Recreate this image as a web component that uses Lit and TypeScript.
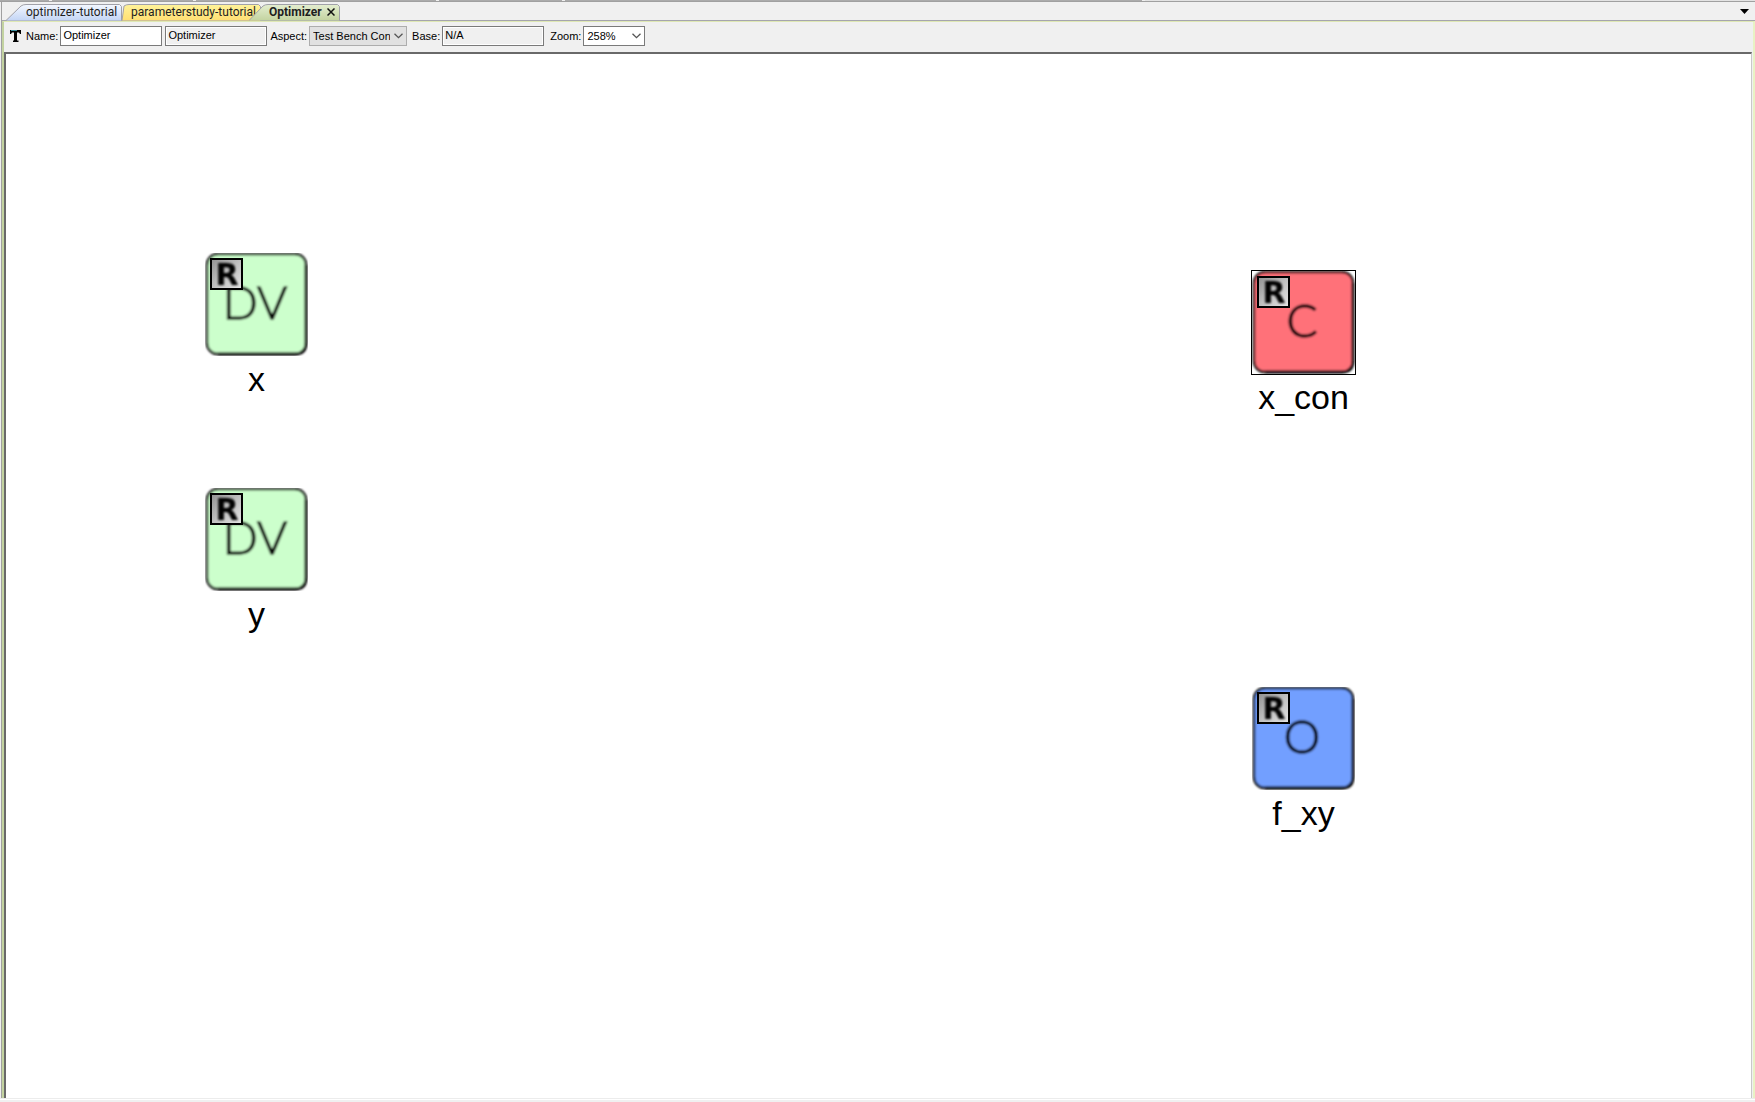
import { LitElement, html, svg, css } from "lit";
import { customElement, property, state } from "lit/decorators.js";

interface DiagramNode {
  id: string;
  label: string;
  letters: string;
  fill: string;
  left: number;
  top: number;
  lettersX: number;
}

const NODES: DiagramNode[] = [
  { id: "x", label: "x", letters: "DV", fill: "#ccffcc", left: 199, top: 199, lettersX: 50 },
  { id: "y", label: "y", letters: "DV", fill: "#ccffcc", left: 199, top: 434, lettersX: 50 },
  { id: "x_con", label: "x_con", letters: "C", fill: "#ff7179", left: 1246, top: 217, lettersX: 50 },
  { id: "f_xy", label: "f_xy", letters: "O", fill: "#729fff", left: 1246, top: 633, lettersX: 50 },
];

@customElement("diagram-node")
export class DiagramNodeElement extends LitElement {
  @property({ attribute: false }) node!: DiagramNode;
  @property({ type: Boolean }) selected = false;

  static styles = css`
    :host {
      display: block;
    }
    .node {
      display: flex;
      flex-direction: column;
      align-items: center;
      width: 103px;
      padding: 0;
      border: 0;
      background: none;
      color: #000;
      font: 34px/40px "Liberation Sans", Arial, sans-serif;
    }
    .icon {
      display: block;
      width: 103px;
      height: 103px;
    }
    .selected .icon {
      outline: 1px solid #000;
    }
    .label {
      margin-top: 3px;
      white-space: nowrap;
    }
    .letters {
      font: 300 46px Lato, sans-serif;
    }
    .ref {
      font: 700 30px "DejaVu Sans", sans-serif;
    }
  `;

  render() {
    const n = this.node;
    return html`
      <button class="node ${this.selected ? "selected" : ""}" type="button">
        <svg class="icon" viewBox="0 0 103 103">
          <defs>
            <filter id="soft"><feGaussianBlur stdDeviation="0.8" /></filter>
            <linearGradient id="metal" x1="0" y1="0" x2="1" y2="1">
              <stop offset="0" stop-color="#909090" />
              <stop offset="0.5" stop-color="#c0c0c0" />
              <stop offset="1" stop-color="#e6e6e6" />
            </linearGradient>
          </defs>
          <g filter="url(#soft)">
            <rect x="2" y="1" width="99" height="100" rx="11" fill=${n.fill} stroke="#000" stroke-width="2.4" />
            <path d="M101 12V90Q101 101 90 101H13" fill="none" stroke="#000" stroke-width="2.8" />
            <text
              class="letters"
              x=${n.lettersX}
              y="66"
              text-anchor="middle"
              fill="#000"
              stroke="#000"
              stroke-width="1.4"
            >${n.letters}</text>
          </g>
          <rect x="6" y="6" width="31" height="30" fill="url(#metal)" stroke="#000" stroke-width="2" />
          <text class="ref" x="22" y="32" text-anchor="middle" filter="url(#soft)">R</text>
        </svg>
        <span class="label">${n.label}</span>
      </button>
    `;
  }
}

@customElement("app-root")
export class AppRoot extends LitElement {
  @state() private selectedId = "x_con";

  static styles = css`
    :host {
      display: flex;
      flex-direction: column;
      box-sizing: border-box;
      min-height: 100vh;
      background: #f0f0f0;
      color: #000;
      font: 11px/14px "Liberation Sans", Arial, sans-serif;
    }
    * {
      box-sizing: border-box;
    }
    .edge {
      display: flex;
      height: 2px;
      background: #e3e3e3;
      border-bottom: 1px solid #a0a0a0;
    }
    .sliver {
      border-right: 3px solid #f0f0f0;
      background: #ababab;
    }
    .frame {
      flex: 1;
      display: flex;
      flex-direction: column;
      margin-left: 1px;
      border-left: 1px solid #a0a0a0;
    }
    .tabs {
      display: flex;
      align-items: flex-end;
      height: 19px;
      padding-left: 4px;
      border-bottom: 1px solid #a5a5ad;
    }
    .tab {
      position: relative;
      height: 17px;
      margin: 0 0 -1px;
      padding: 0 0 2px;
      border: 0;
      background: none;
      color: #1e1e1e;
      font: 12px/14px Roboto, "Open Sans", sans-serif;
      text-align: left;
      white-space: nowrap;
    }
    .shape {
      position: absolute;
      inset: 0;
      width: 100%;
      height: 100%;
    }
    .caption {
      position: relative;
    }
    .blue {
      width: 116px;
      padding-left: 20px;
    }
    .yellow {
      width: 139px;
      padding-left: 9px;
    }
    .green {
      display: flex;
      align-items: center;
      justify-content: space-between;
      width: 91px;
      margin-left: -12px;
      padding: 0 5px 2px 20px;
      font-weight: 700;
    }
    .close {
      position: relative;
      flex: none;
      width: 8px;
      height: 8px;
    }
    .menu {
      align-self: center;
      display: flex;
      margin: 0 6px 0 auto;
      padding: 0;
      border: 0;
      background: none;
    }
    .body {
      flex: 1;
      display: flex;
      flex-direction: column;
      border: solid;
      border-width: 1px 2px 0;
      border-color: #dfe8b4 #e8f2c4 #dfe8b4 #c3d3a0;
    }
    .toolbar {
      display: flex;
      align-items: center;
      height: 30px;
      padding: 0 0 2px 5px;
    }
    .type {
      width: 13px;
      height: 13px;
      margin-right: 4px;
    }
    .toolbar label {
      padding-right: 2px;
    }
    .field,
    .list {
      height: 20px;
      margin: 0 3px 0 0;
      padding: 0 2px 2px;
      border: 1px solid #7a7a7a;
      border-radius: 0;
      background: #fff;
      color: #000;
      font: inherit;
      outline: 0;
    }
    .field {
      width: 102px;
    }
    .field[readonly] {
      background: #f0f0f0;
      box-shadow: inset 0 0 0 1px #fff;
    }
    .group-end {
      margin-right: 6px;
    }
    .drop {
      display: grid;
      align-items: center;
      margin-right: 5px;
    }
    .drop > * {
      grid-area: 1 / 1;
    }
    .list {
      appearance: none;
      margin: 0;
      padding: 0 16px 0 3px;
    }
    .aspect {
      width: 98px;
      border-color: #adadad;
      background: #e1e1e1;
    }
    .zoom {
      width: 62px;
    }
    .chevron {
      justify-self: end;
      width: 9px;
      height: 6px;
      margin-right: 4px;
      pointer-events: none;
    }
    .canvas {
      position: relative;
      flex: 1;
      overflow: hidden;
      border: solid;
      border-width: 2px 1px 0 2px;
      border-color: #696969 #c8c8c8 #fff #696969;
      margin-right: 1px;
      background: #fff;
    }
    .place {
      position: absolute;
    }
    .foot {
      height: 4px;
      border-top: 1px solid #ececec;
      border-bottom: 2px solid #f0f0f0;
      background: #fff;
    }
  `;

  private chevron() {
    return html`<svg class="chevron" viewBox="0 0 9 6">
      <path d="M.5 .7 4.5 4.7 8.5 .7" fill="none" stroke="#555" stroke-width="1.3" />
    </svg>`;
  }

  private shape(id: string, width: number, slant: number, colors: string[]) {
    return html`<svg class="shape" viewBox="0 0 ${width} 17" preserveAspectRatio="none">
      <defs>
        <linearGradient id=${id} x1="0" y1="0" x2="0" y2="1">
          <stop offset="0" stop-color=${colors[0]} />
          <stop offset="1" stop-color=${colors[1]} />
        </linearGradient>
      </defs>
      ${svg`<path
        d="M0 16.5 L${slant - 2} 2 Q${slant} .5 ${slant + 3} .5 H${width - 2.5} L${width - 0.5} 2.5 V16.5 Z"
        fill="url(#${id})" />
      <path
        d="M0 16.5 L${slant - 2} 2 Q${slant} .5 ${slant + 3} .5 H${width - 2.5} L${width - 0.5} 2.5 V16.5"
        fill="none" stroke="#a0a0a8" />`}
    </svg>`;
  }

  render() {
    return html`
      <div class="edge">
        ${[52, 144, 243, 126, 580].map((w) => html`<span class="sliver" style="width:${w}px"></span>`)}
      </div>
      <div class="frame">
        <nav class="tabs">
          <button class="tab blue" type="button">
            ${this.shape("blue", 116, 17, ["#f4f8ff", "#c3d5f5"])}<span class="caption">optimizer-tutorial</span>
          </button>
          <button class="tab yellow" type="button">
            ${this.shape("yellow", 139, 4, ["#fff39a", "#ffdf73"])}<span class="caption">parameterstudy-tutorial</span>
          </button>
          <button class="tab green" type="button">
            ${this.shape("green", 91, 16, ["#e4eed0", "#c3d3a0"])}<span class="caption">Optimizer</span>
            <svg class="close" viewBox="0 0 8 8">
              <path d="M.5 .5 7.5 7.5 M7.5 .5 .5 7.5" stroke="#111" stroke-width="1.5" />
            </svg>
          </button>
          <button class="menu" type="button" aria-label="Open tabs">
            <svg width="9" height="5" viewBox="0 0 9 5"><path d="M0 0H9L4.5 5Z" /></svg>
          </button>
        </nav>
        <div class="body">
          <div class="toolbar">
            <svg class="type" viewBox="0 0 13 13">
              <path d="M1 0H12V4H11L10 2.500H8V10.500H9.500V12H4V10.500H5V2.500H3L2 4H1Z" fill="#000" />
              <path d="M2 .5H8" stroke="#3a8c9c" />
            </svg>
            <label for="name">Name:</label>
            <input class="field" id="name" value="Optimizer" />
            <input class="field" aria-label="Kind" value="Optimizer" readonly />
            <label for="aspect">Aspect:</label>
            <div class="drop">
              <select class="list aspect" id="aspect"><option>Test Bench Configuration</option></select>
              ${this.chevron()}
            </div>
            <label for="base">Base:</label>
            <input class="field group-end" id="base" value="N/A" readonly />
            <label for="zoom">Zoom:</label>
            <div class="drop">
              <select class="list zoom" id="zoom"><option>258%</option></select>
              ${this.chevron()}
            </div>
          </div>
          <main class="canvas">
            ${NODES.map(
              (n) => html`<diagram-node
                class="place"
                style="left:${n.left}px;top:${n.top}px"
                .node=${n}
                .selected=${n.id === this.selectedId}
                @click=${() => (this.selectedId = n.id)}
              ></diagram-node>`
            )}
          </main>
        </div>
      </div>
      <div class="foot"></div>
    `;
  }
}
